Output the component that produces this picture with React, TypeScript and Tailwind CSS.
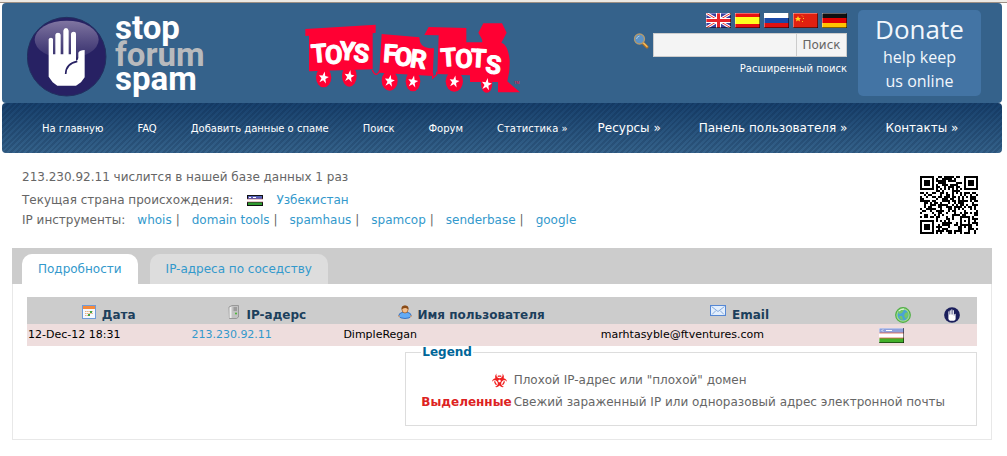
import React from "react";
import { FaBiohazard } from "react-icons/fa";

/* ---------- QR code (version 3, level L, byte mode) ---------- */

const QR_SIZE = 29;

function gfMul(a: number, b: number): number {
  let r = 0;
  for (let i = 7; i >= 0; i--) {
    r = (r << 1) ^ ((r >>> 7) * 0x11d);
    r ^= ((b >>> i) & 1) * a;
  }
  return r;
}

function encodeCodewords(text: string): number[] {
  const bits: number[] = [];
  const push = (value: number, length: number) => {
    for (let i = length - 1; i >= 0; i--) bits.push((value >>> i) & 1);
  };
  push(4, 4);
  push(text.length, 8);
  for (const ch of text) push(ch.charCodeAt(0), 8);
  push(0, 4);
  while (bits.length % 8) bits.push(0);
  const data: number[] = [];
  for (let i = 0; i < bits.length; i += 8) data.push(parseInt(bits.slice(i, i + 8).join(""), 2));
  for (let pad = 0xec; data.length < 55; pad ^= 0xec ^ 0x11) data.push(pad);

  const degree = 15;
  const divisor: number[] = Array(degree).fill(0);
  divisor[degree - 1] = 1;
  let root = 1;
  for (let i = 0; i < degree; i++) {
    for (let j = 0; j < degree; j++) {
      divisor[j] = gfMul(divisor[j], root);
      if (j + 1 < degree) divisor[j] ^= divisor[j + 1];
    }
    root = gfMul(root, 2);
  }
  const rest: number[] = Array(degree).fill(0);
  for (const b of data) {
    const factor = b ^ (rest.shift() as number);
    rest.push(0);
    divisor.forEach((c, i) => (rest[i] ^= gfMul(c, factor)));
  }
  return data.concat(rest);
}

const maskRules: ((x: number, y: number) => boolean)[] = [
  (x, y) => (x + y) % 2 === 0,
  (_x, y) => y % 2 === 0,
  (x) => x % 3 === 0,
  (x, y) => (x + y) % 3 === 0,
  (x, y) => (Math.floor(x / 3) + Math.floor(y / 2)) % 2 === 0,
  (x, y) => ((x * y) % 2) + ((x * y) % 3) === 0,
  (x, y) => (((x * y) % 2) + ((x * y) % 3)) % 2 === 0,
  (x, y) => (((x + y) % 2) + ((x * y) % 3)) % 2 === 0,
];

function buildMatrix(codewords: number[], mask: number): boolean[][] {
  const n = QR_SIZE;
  const m: boolean[][] = Array.from({ length: n }, () => Array(n).fill(false));
  const fixed: boolean[][] = Array.from({ length: n }, () => Array(n).fill(false));
  const set = (x: number, y: number, dark: boolean) => {
    m[y][x] = dark;
    fixed[y][x] = true;
  };
  for (let i = 0; i < n; i++) {
    set(6, i, i % 2 === 0);
    set(i, 6, i % 2 === 0);
  }
  for (const [cx, cy] of [[3, 3], [n - 4, 3], [3, n - 4]]) {
    for (let dy = -4; dy <= 4; dy++)
      for (let dx = -4; dx <= 4; dx++) {
        const d = Math.max(Math.abs(dx), Math.abs(dy));
        const x = cx + dx;
        const y = cy + dy;
        if (x >= 0 && x < n && y >= 0 && y < n) set(x, y, d !== 2 && d !== 4);
      }
  }
  for (let dy = -2; dy <= 2; dy++)
    for (let dx = -2; dx <= 2; dx++)
      set(22 + dx, 22 + dy, Math.max(Math.abs(dx), Math.abs(dy)) !== 1);

  const format = (1 << 3) | mask;
  let rem = format;
  for (let i = 0; i < 10; i++) rem = (rem << 1) ^ ((rem >>> 9) * 0x537);
  const fbits = ((format << 10) | rem) ^ 0x5412;
  const bit = (i: number) => ((fbits >>> i) & 1) === 1;
  for (let i = 0; i <= 5; i++) set(8, i, bit(i));
  set(8, 7, bit(6));
  set(8, 8, bit(7));
  set(7, 8, bit(8));
  for (let i = 9; i < 15; i++) set(14 - i, 8, bit(i));
  for (let i = 0; i < 8; i++) set(n - 1 - i, 8, bit(i));
  for (let i = 8; i < 15; i++) set(8, n - 15 + i, bit(i));
  set(8, n - 8, true);

  let k = 0;
  for (let right = n - 1; right >= 1; right -= 2) {
    if (right === 6) right = 5;
    for (let v = 0; v < n; v++)
      for (let j = 0; j < 2; j++) {
        const x = right - j;
        const y = ((right + 1) & 2) === 0 ? n - 1 - v : v;
        if (fixed[y][x]) continue;
        const dark = k < codewords.length * 8 && ((codewords[k >>> 3] >>> (7 - (k & 7))) & 1) === 1;
        k++;
        m[y][x] = dark !== maskRules[mask](x, y);
      }
  }
  return m;
}

function penalty(m: boolean[][]): number {
  const n = QR_SIZE;
  let score = 0;
  const lines = [
    ...m.map((r) => r.map((c) => (c ? "1" : "0")).join("")),
    ...m.map((_, x) => m.map((r) => (r[x] ? "1" : "0")).join("")),
  ];
  for (const line of lines) {
    for (const run of line.match(/0{5,}|1{5,}/g) ?? []) score += run.length - 2;
    for (let i = 0; i + 11 <= n; i++) {
      const s = line.slice(i, i + 11);
      if (s === "10111010000" || s === "00001011101") score += 40;
    }
  }
  for (let y = 0; y < n - 1; y++)
    for (let x = 0; x < n - 1; x++)
      if (m[y][x] === m[y][x + 1] && m[y][x] === m[y + 1][x] && m[y][x] === m[y + 1][x + 1]) score += 3;
  const dark = m.flat().filter(Boolean).length;
  score += Math.floor(Math.abs((dark / (n * n)) * 100 - 50) / 5) * 10;
  return score;
}

function qrPath(text: string): string {
  const codewords = encodeCodewords(text);
  const best = maskRules
    .map((_, mask) => buildMatrix(codewords, mask))
    .reduce((a, b) => (penalty(b) < penalty(a) ? b : a));
  return best
    .map((row, y) => row.map((dark, x) => (dark ? `M${x} ${y}h1v1h-1z` : "")).join(""))
    .join("");
}

function QrCode({ text }: { text: string }) {
  return (
    <svg viewBox="0 0 29 29" className="h-[58px] w-[58px] shrink-0" shapeRendering="crispEdges" aria-hidden="true">
      <path d={qrPath(text)} fill="#000" />
    </svg>
  );
}

/* ---------- Logos ---------- */

function HandShape() {
  return (
    <path
      fill="#fff"
      d="M146 118q1-5 7-5q6 0 6 5V163H166V104q1-6 8-6t8 6V163H190V92q1-8 8-8t8 8V163H213V101q1-6 8-6t7 6V182Q235 181 235 174V158q4-8 19-8V232L243 247L228 257H172L158 247L146 230Z"
    />
  );
}

function SiteLogo() {
  return (
    <svg viewBox="0 -12 184 96" className="h-[96px] w-[184px] shrink-0" aria-label="stop forum spam">
      <defs>
        <linearGradient id="gloss" x1="0" y1="0" x2="0" y2="1">
          <stop offset="0" stopColor="#8a7fa8" stopOpacity="0.9" />
          <stop offset="1" stopColor="#3b3470" stopOpacity="0.75" />
        </linearGradient>
      </defs>
      <g transform="translate(-27 -16) scale(0.33333)">
        <circle cx="200" cy="170" r="118" fill="#272163" stroke="#21305f" strokeWidth="3" />
        <ellipse cx="200" cy="119" rx="96" ry="57" fill="url(#gloss)" />
        <HandShape />
        <path d="M197 222Q198 190 232 184" fill="none" stroke="#272163" strokeWidth="5" />
      </g>
      <g fontFamily="Roboto, sans-serif" fontWeight="700" fontSize="33">
        <text x="88" y="23" fill="#fff">stop</text>
        <text x="88" y="50" fill="#b8babd">forum</text>
        <text x="88" y="74" fill="#fff">spam</text>
      </g>
    </svg>
  );
}

const wheels = [
  [101, 202, 23, 30],
  [178, 198, 22, 32],
  [299, 212, 24, 30],
  [369, 214, 22, 30],
  [493, 214, 26, 31],
  [590, 222, 17, 26],
];

function TrainLogo() {
  return (
    <svg viewBox="45 33 660 225" className="h-[75px] w-[220px] shrink-0" aria-label="Toys for Tots">
      <g fill="#ff0033">
        <path d="M46 57L257 44V68L248 70V178L57 184V77L46 78Z" />
        <path d="M275 72L388 82Q388 112 418 115L432 115L428 198L268 188Z" />
        <path d="M416 51L529 54V97H577L576 88L565 68L580 40H636L650 68L634 98Q654 104 659 150Q660 185 652 214L690 247H624V216H540V196L442 192L446 76L403 75Z" />
        {wheels.map(([cx, cy, rx, ry]) => (
          <ellipse key={cx} cx={cx} cy={cy} rx={rx} ry={ry} />
        ))}
      </g>
      <path d="M247 180Q258 206 270 180M428 190V204L440 194V185" fill="none" stroke="#ff0033" strokeWidth="4" />
      <g fill="#fff">
        {wheels.map(([cx, cy]) => (
          <path
            key={cx}
            transform={`translate(${cx} ${cy}) rotate(10)`}
            d="M0-18L4-5L15-4L6 4L10 17L0 9L-10 17L-6 4L-15-4L-4-5Z"
          />
        ))}
      </g>
      <g
        fill="#fff"
        stroke="#fff"
        strokeWidth="3"
        strokeLinejoin="round"
        fontFamily="Roboto, sans-serif"
        fontWeight="700"
        fontSize="76"
      >
        <text x="66 105 147 188" y="158 162 148 154" rotate="-5 0 4 6">TOYS</text>
        <text x="278 313 358" y="156 166 170" rotate="4 3 8">FOR</text>
        <text x="454 496 541 584" y="170 174 170 188" rotate="-4 0 3 6">TOTS</text>
      </g>
      <text x="672" y="221" fill="#ff0033" fontFamily="Liberation Sans, sans-serif" fontSize="11">TM</text>
    </svg>
  );
}

/* ---------- Flags and small icons ---------- */

function FlagFrame({ children, className = "h-[15px] w-[25px]" }: { children: React.ReactNode; className?: string }) {
  return (
    <svg viewBox="0 0 25 15" preserveAspectRatio="none" className={`block shrink-0 ${className}`} aria-hidden="true">
      {children}
      <path d="M0 .5H25M.5 0V15" stroke="#fff" strokeOpacity="0.35" />
      <path d="M0 14.5H25M24.5 0V15" stroke="#000" strokeOpacity="0.5" />
    </svg>
  );
}

const Stripes = ({ colors }: { colors: string[] }) => (
  <>
    {colors.map((c, i) => (
      <rect key={i} y={i * 5} width="25" height="5" fill={c} />
    ))}
  </>
);

const flags: { name: string; art: React.ReactNode }[] = [
  {
    name: "English",
    art: (
      <>
        <rect width="25" height="15" fill="#3a3fa0" />
        <path d="M0 0L25 15M25 0L0 15" stroke="#fff" strokeWidth="3" />
        <path d="M0 0L25 15M25 0L0 15" stroke="#e33" strokeWidth="1" />
        <path d="M12.5 0V15M0 7.5H25" stroke="#fff" strokeWidth="5" />
        <path d="M12.5 0V15M0 7.5H25" stroke="#e8232b" strokeWidth="3" />
      </>
    ),
  },
  {
    name: "Español",
    art: (
      <>
        <rect width="25" height="15" fill="#e81010" />
        <rect y="4" width="25" height="7" fill="#ffff20" />
      </>
    ),
  },
  { name: "Русский", art: <Stripes colors={["#ffffff", "#1a4aa8", "#e01010"]} /> },
  {
    name: "中文",
    art: (
      <>
        <rect width="25" height="15" fill="#e02010" />
        <path d="M5 3L6 5H8L6.500 6.500L7 8.500L5 7.300L3 8.500L3.500 6.500L2 5H4Z" fill="#ffd020" />
        <path d="M9 2.500L10 3.500M10.500 5V6M10 8L9 9" stroke="#ffc020" />
      </>
    ),
  },
  { name: "Deutsch", art: <Stripes colors={["#101010", "#e00000", "#ffc400"]} /> },
];

const UzbekArt = () => (
  <>
    <rect width="25" height="5" fill="#8fa0dc" />
    <rect y="5" width="25" height="5" fill="#fff" />
    <rect y="10" width="25" height="5" fill="#43b02a" />
    <path d="M0 5H25M0 10H25" stroke="#e06048" strokeWidth="0.8" />
    <path d="M4 1.500Q2 2.500 4 3.500M7 2.500H13" stroke="#fff" fill="none" />
  </>
);

const UzbekSmall = () => (
  <svg viewBox="0 0 16 11" className="block h-[11px] w-4" aria-hidden="true">
    <rect width="16" height="11" fill="#111" />
    <rect x="1" y="1" width="14" height="3" fill="#5560b8" />
    <rect y="4" width="16" height="3" fill="#fff" />
    <path d="M0 4H16M0 7H16" stroke="#b04858" strokeWidth=".6" />
    <rect x="1" y="7.500" width="14" height="2.500" fill="#2f9a30" />
    <path d="M2 2.500H4M6 2.500H9" stroke="#fff" />
  </svg>
);

const SearchIcon = () => (
  <svg viewBox="0 0 16 16" className="h-4 w-4 shrink-0" aria-hidden="true">
    <path d="M10 10L14 14" stroke="#b87420" strokeWidth="3" strokeLinecap="round" />
    <path d="M10.500 10L14 13.500" stroke="#f4bd62" strokeWidth="1.200" strokeLinecap="round" />
    <circle cx="6.500" cy="6" r="5" fill="#5c93c8" stroke="#b59a6c" strokeWidth="1.300" />
    <path d="M3.500 6Q4 3.500 6.500 3" fill="none" stroke="#a9cdec" />
  </svg>
);

const CalendarIcon = () => (
  <svg viewBox="0 0 14 14" className="h-[14px] w-[14px]" aria-hidden="true">
    <rect x=".5" y=".5" width="13" height="13" fill="#f4f8ff" stroke="#6f9bd8" />
    <rect x="1" y="1" width="12" height="3" fill="#f58a3c" />
    <path d="M3 6.500H11M3 8.500H11M3 10.500H8" stroke="#e8b27c" strokeDasharray="1.500 .6" />
    <path d="M8 7H10M6 10H8" stroke="#43a045" strokeWidth="2" />
  </svg>
);

const ServerIcon = () => (
  <svg viewBox="0 0 14 14" className="h-[14px] w-[14px]" aria-hidden="true">
    <path d="M2 2L5 .5H11.500V12L9.500 13.500H2.500Z" fill="#c2c2c2" stroke="#8c8c8c" strokeWidth=".8" />
    <path d="M2.500 2.500L4.500 1.500V13H2.500Z" fill="#eee" />
    <path d="M6.500 3H10M6.500 5H10" stroke="#777" />
    <circle cx="9" cy="8.500" r="1" fill="#45b52f" />
  </svg>
);

const UserIcon = () => (
  <svg viewBox="0 0 14 14" className="h-[14px] w-[14px]" aria-hidden="true">
    <path d="M.7 11Q1 8 4 7.500H10Q13 8 13.300 11Q12 13.500 7 13.500T.7 11Z" fill="#63abf5" stroke="#2e6cc0" strokeWidth=".9" />
    <path d="M1 10.500V12M13 10.500V12" stroke="#e8a468" strokeWidth="1.500" />
    <ellipse cx="7" cy="4.500" rx="3" ry="3.500" fill="#f4bf8c" stroke="#9c5a20" strokeWidth=".7" />
    <path d="M3.500 4.500Q3 .4 7 .4T10.500 4.500Q9 2.800 7 3T3.500 4.500Z" fill="#8a4b16" />
  </svg>
);

const MailIcon = () => (
  <svg viewBox="0 0 16 11" className="h-[11px] w-4" aria-hidden="true">
    <rect x=".5" y=".5" width="15" height="10" fill="#e3effd" stroke="#5587d4" />
    <path d="M1.500 1.500L8 6.500L14.500 1.500M2 9.500L6 5.500M14 9.500L10 5.500" fill="none" stroke="#86aadd" />
  </svg>
);

const GlobeIcon = () => (
  <svg viewBox="0 0 16 16" className="h-4 w-4" aria-hidden="true">
    <circle cx="8" cy="8" r="7.300" fill="#a4dc8c" stroke="#4fae45" strokeWidth="1.200" />
    <circle cx="8" cy="8" r="5.500" fill="#4aa3d4" />
    <path d="M3 5Q6 1.500 9 3L7 6L4 7ZM10 6L13 5Q14 9 11 12L9 9ZM4 9L7 9L8 13Q5 13 4 9Z" fill="#72c66a" />
    <path d="M4 4Q6 2 9 2" stroke="#e8ffe0" fill="none" />
  </svg>
);

const HandIcon = () => (
  <svg viewBox="80 50 240 240" className="h-4 w-4" aria-hidden="true">
    <circle cx="200" cy="170" r="118" fill="#1b1f5c" />
    <HandShape />
  </svg>
);

/* ---------- Page ---------- */

const smallNav = ["На главную", "FAQ", "Добавить данные о спаме", "Поиск", "Форум", "Статистика »"];
const largeNav = ["Ресурсы »", "Панель пользователя »", "Контакты »"];
const tools = ["whois", "domain tools", "spamhaus", "spamcop", "senderbase", "google"];

const headings: { label: string; icon: React.ReactNode }[] = [
  { label: "Дата", icon: <CalendarIcon /> },
  { label: "IP-адерс", icon: <ServerIcon /> },
  { label: "Имя пользователя", icon: <UserIcon /> },
  { label: "Email", icon: <MailIcon /> },
  { label: "", icon: <GlobeIcon /> },
  { label: "", icon: <HandIcon /> },
];

export default function App() {
  return (
    <div className="bg-white font-['Verdana','DejaVu_Sans',sans-serif] text-[12px] text-[#666]">
      <div className="h-[3px] border-b border-[#9c8f84] bg-[#ece9e4]" />
      <div className="pr-[5px] pl-[2px]">
        <header className="flex h-[100px] items-start rounded-[4px] bg-[#35628b] pr-[21px] pl-[25px]">
          <a href="#home" className="mt-px">
            <SiteLogo />
          </a>
          <a href="#toys" className="mt-[18px] ml-[94px]">
            <TrainLogo />
          </a>
          <div className="mt-[10px] ml-auto flex flex-col items-end">
            <div className="flex gap-1">
              {flags.map((f) => (
                <a key={f.name} href="#lang" aria-label={f.name}>
                  <FlagFrame>{f.art}</FlagFrame>
                </a>
              ))}
            </div>
            <form className="mt-[5px] flex items-start" onSubmit={(e) => e.preventDefault()}>
              <label htmlFor="q" aria-label="Поиск" className="mr-1">
                <SearchIcon />
              </label>
              <input
                id="q"
                type="text"
                className="h-6 w-[144px] border border-[#ccc] bg-[#f4f4f4] px-1 text-[12px] outline-none"
              />
              <button type="submit" className="h-6 w-[50px] border border-l-0 border-[#ccc] bg-[#f4f4f4] text-[12px]">
                Поиск
              </button>
            </form>
            <a href="#advanced" className="mt-1 text-[10px] leading-4 text-white">
              Расширенный поиск
            </a>
          </div>
          <a
            href="#donate"
            className="mt-[7px] ml-[11px] flex h-[86px] w-[123px] flex-col items-center rounded-[5px] bg-[#4374a4] font-['Open_Sans',sans-serif] text-[16px] leading-6 text-[#f2f7fc]"
          >
            <span className="mt-[3px] text-[26px] leading-8">Donate</span>
            <span>help keep</span>
            <span>us online</span>
          </a>
        </header>

        <nav className="flex h-[50px] items-center rounded-[4px] bg-[repeating-linear-gradient(135deg,rgba(0,20,50,0.16)_0px,rgba(0,20,50,0.16)_2px,transparent_2px,transparent_4px),linear-gradient(to_bottom,#17406c,#35628a)] pl-10 text-white">
          <ul className="flex items-center gap-[34px] text-[10px]">
            {smallNav.map((item) => (
              <li key={item}>
                <a href="#nav">{item}</a>
              </li>
            ))}
          </ul>
          <ul className="ml-[30px] flex items-center gap-[38px]">
            {largeNav.map((item) => (
              <li key={item}>
                <a href="#nav">{item}</a>
              </li>
            ))}
          </ul>
        </nav>
      </div>

      <main className="pr-[15px] pl-3">
        <section className="flex items-start justify-between pt-3 pr-[14px] pl-[10px]">
          <div>
            <p className="leading-6">213.230.92.11 числится в нашей базе данных 1 раз</p>
            <p className="flex items-center leading-[22px]">
              Текущая страна происхождения:
              <span className="mr-[13px] ml-[14px]">
                <UzbekSmall />
              </span>
              <a href="#country" className="text-[#3399cc]">
                Узбекистан
              </a>
            </p>
            <p className="leading-[18px]">
              IP инструменты:
              {tools.map((tool, i) => (
                <React.Fragment key={tool}>
                  <a href="#tool" className="mr-1 ml-3 text-[#3399cc]">
                    {tool}
                  </a>
                  {i < tools.length - 1 && "|"}
                </React.Fragment>
              ))}
            </p>
          </div>
          <div className="mt-[11px]">
            <QrCode text="http://www.stopforumspam.com/ipcheck/213.230.92.11" />
          </div>
        </section>

        <div className="mt-[14px] flex h-9 items-end gap-3 bg-[#ccc] pl-[10px] text-[#3399cc]">
          <button type="button" className="h-[30px] rounded-t-[10px] bg-white px-4">
            Подробности
          </button>
          <button type="button" className="h-[30px] rounded-t-[10px] bg-[#ddd] px-4">
            IP-адреса по соседству
          </button>
        </div>

        <section className="border border-t-0 border-[#e8e8e8] px-[14px] pt-[13px] pb-[13px]">
          <table className="w-full table-fixed border-collapse text-[11px] text-black">
            <colgroup>
              <col className="w-[17.2%]" />
              <col className="w-[16%]" />
              <col className="w-[27.1%]" />
              <col className="w-[29.4%]" />
              <col className="w-[5%]" />
              <col className="w-[5.3%]" />
            </colgroup>
            <thead className="bg-[#ccc] text-[12px] text-[#1c3f5c]">
              <tr className="h-[27px]">
                {headings.map((h, i) => (
                  <th key={i} className="p-0 pt-[6px] font-bold">
                    <span className="flex items-start justify-center gap-[6px]">
                      <span className="mt-[2px]">{h.icon}</span>
                      {h.label && <span className="mt-[3px] leading-[18px]">{h.label}</span>}
                    </span>
                  </th>
                ))}
              </tr>
            </thead>
            <tbody>
              <tr className="h-[22px] bg-[#eedddd]">
                <td className="p-0 pl-px">12-Dec-12 18:31</td>
                <td className="p-0 pl-px">
                  <a href="#ip" className="text-[#3399cc]">
                    213.230.92.11
                  </a>
                </td>
                <td className="p-0 pl-px">DimpleRegan</td>
                <td className="p-0 pl-px">marhtasyble@ftventures.com</td>
                <td className="p-0">
                  <FlagFrame>
                    <UzbekArt />
                  </FlagFrame>
                </td>
                <td className="p-0" />
              </tr>
            </tbody>
          </table>

          <fieldset className="ml-auto w-fit border border-[#ddd] pt-[11px] pr-[31px] pb-3 pl-[15px]">
            <legend className="px-px leading-3 font-bold text-[#006699]">Legend</legend>
            <table className="border-collapse">
              <tbody>
                <tr className="h-[22px]">
                  <td className="p-0">
                    <span className="flex justify-end pr-[7px] text-[15px] text-[#f02020]">
                      <FaBiohazard />
                    </span>
                  </td>
                  <td className="p-0">Плохой IP-адрес или "плохой" домен</td>
                </tr>
                <tr className="h-[22px]">
                  <td className="p-0 pr-[2px] font-bold text-[#dd2222]">Выделенные</td>
                  <td className="p-0">Свежий зараженный IP или одноразовый адрес электронной почты</td>
                </tr>
              </tbody>
            </table>
          </fieldset>
        </section>
      </main>
    </div>
  );
}
